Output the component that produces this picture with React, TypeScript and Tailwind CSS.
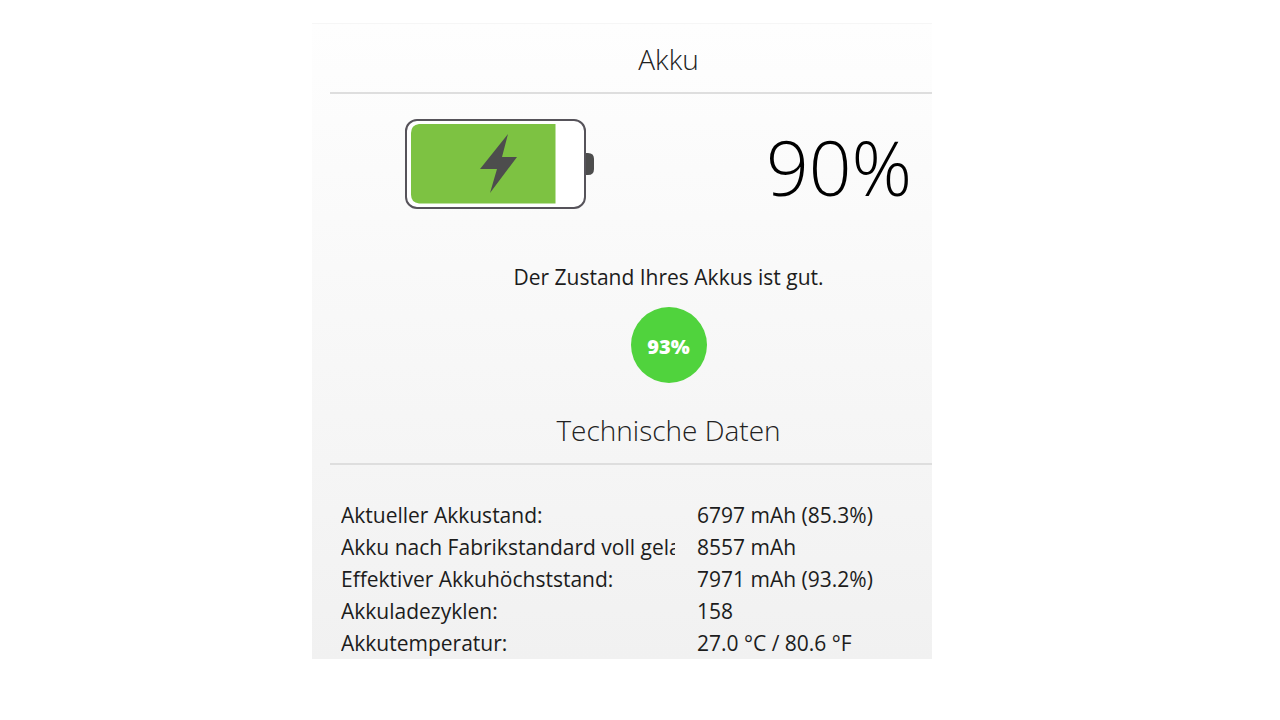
import React from 'react';

const readings = [
  { label: 'Aktueller Akkustand:', value: '6797 mAh (85.3%)' },
  { label: 'Akku nach Fabrikstandard voll geladen:', value: '8557 mAh' },
  { label: 'Effektiver Akkuhöchststand:', value: '7971 mAh (93.2%)' },
  { label: 'Akkuladezyklen:', value: '158' },
  { label: 'Akkutemperatur:', value: '27.0 °C / 80.6 °F' },
];

const BatteryIcon: React.FC = () => (
  <svg width="190" height="90" viewBox="0 0 190 90" role="img" aria-label="Akku wird geladen">
    <path d="M179 34h4q6 0 6 6v10q0 6-6 6h-4z" fill="#4d4d4d" />
    <rect x="1" y="1" width="179" height="88" rx="11" fill="#fff" stroke="#56535a" strokeWidth="2" />
    <path d="M14 5h136.500v79.500H14q-8-1-8-9V14q0-8 8-9z" fill="#7dc242" />
    <path d="M103 15L75 50h17L85 74l27-36H97z" fill="#4d4d4d" />
  </svg>
);

const SectionTitle: React.FC<{ children: React.ReactNode }> = ({ children }) => (
  <h2 className="h-[70px] pt-0.5 border-b-2 border-[#dedede] flex items-center justify-center text-[28px] font-light text-[#222]">
    {children}
  </h2>
);

export default function App() {
  return (
    <div className="min-h-screen bg-white pt-[23px] pb-6 pl-[312px] font-['Open_Sans','Noto_Sans',sans-serif]">
      <main className="w-full max-w-[620px] overflow-hidden border-t border-[#f6f6f6] bg-linear-to-b from-[#fefefe] to-[#f1f1f1] pl-[18px] text-[#1c1c1c]">
        <div className="w-[677px]">
          <section>
            <SectionTitle>Akku</SectionTitle>
            <div className="mt-[25px] h-[110px] flex items-start pl-[75px]">
              <BatteryIcon />
              <span className="ml-[171px] text-[75px] leading-24 font-light text-black">90%</span>
            </div>
            <p className="mt-8 text-center text-[21px] leading-8">Der Zustand Ihres Akkus ist gut.</p>
            <div className="mx-auto mt-[14px] flex size-[76px] items-center justify-center rounded-full bg-[#50d33d] pt-1 text-xl font-extrabold text-white">
              93%
            </div>
          </section>

          <section className="mt-3">
            <SectionTitle>Technische Daten</SectionTitle>
            <table className="mt-[34px] ml-[11px] table-fixed text-[21px] leading-8">
              <tbody>
                {readings.map((row) => (
                  <tr key={row.label}>
                    <th scope="row" className="p-0 text-left font-normal">
                      <div className="w-[334px] overflow-hidden whitespace-nowrap">{row.label}</div>
                    </th>
                    <td className="p-0 pl-[22px] whitespace-nowrap">{row.value}</td>
                  </tr>
                ))}
              </tbody>
            </table>
          </section>
        </div>
      </main>
    </div>
  );
}
